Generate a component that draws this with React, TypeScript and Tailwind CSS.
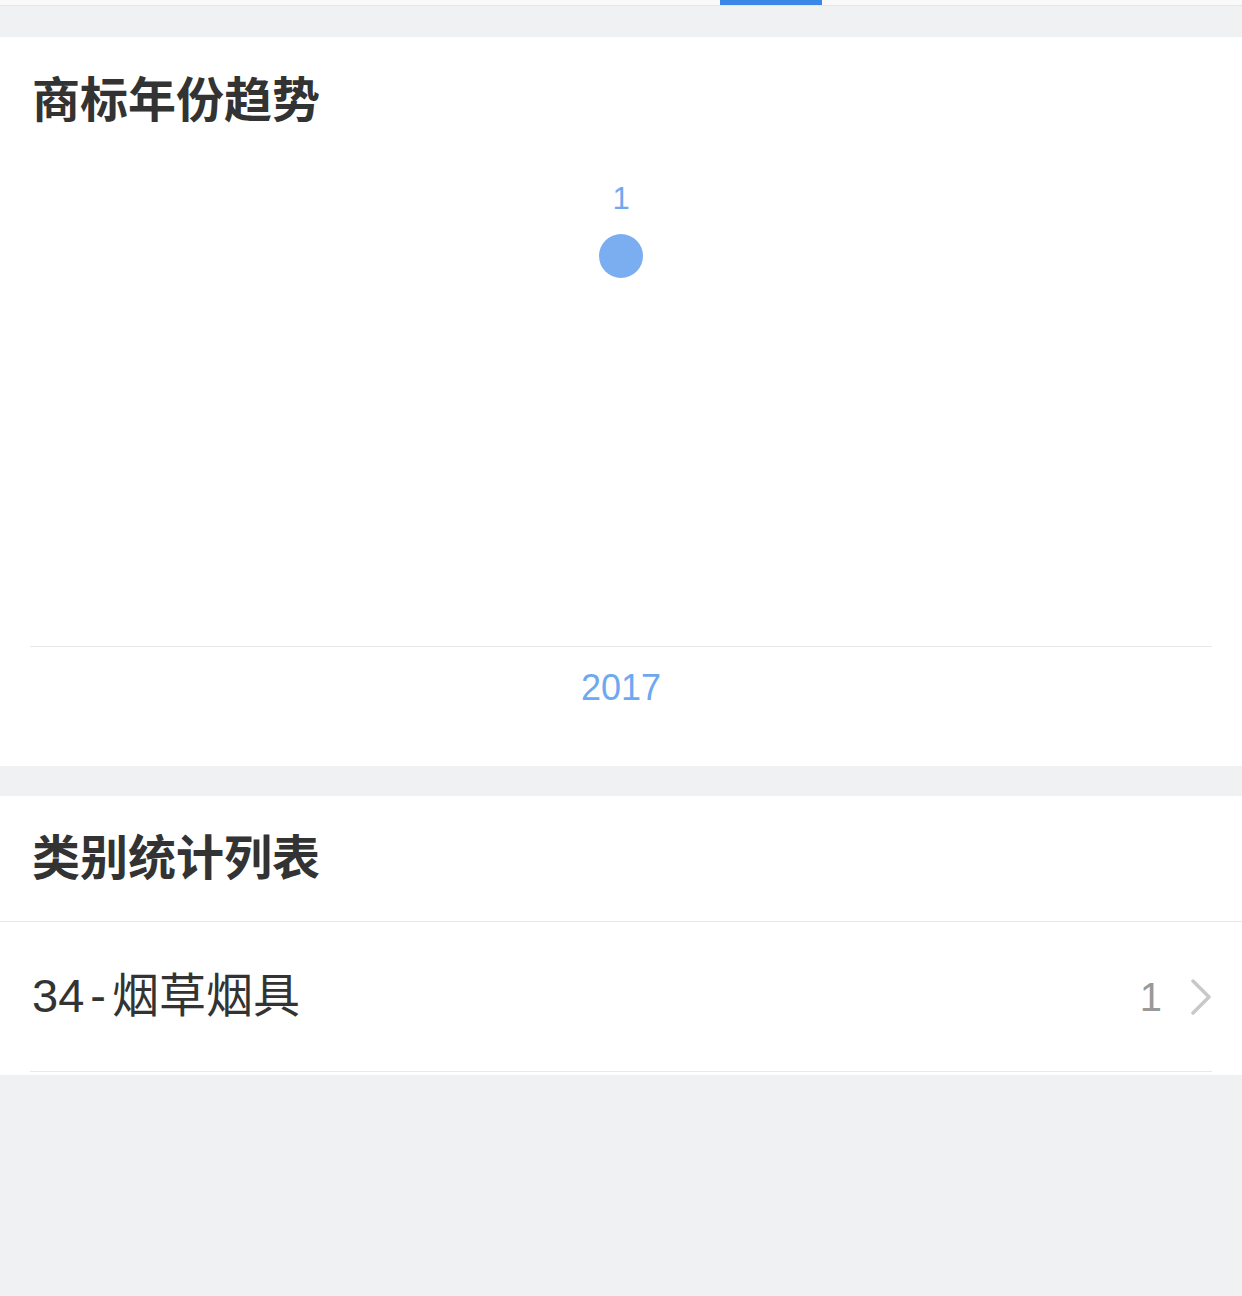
import React from 'react';

const font = { fontFamily: '"Liberation Sans", "Noto Sans CJK SC", sans-serif' };

type TrendPoint = { year: string; count: number };
type CategoryRow = { code: string; name: string; count: number };

const trend: TrendPoint[] = [{ year: '2017', count: 1 }];
const categories: CategoryRow[] = [{ code: '34', name: '烟草烟具', count: 1 }];

function ChevronRight() {
    return (
        <svg width="22" height="36" viewBox="0 0 22 36" fill="none">
            <path d="M3 2 L19 18 L3 34" stroke="#c8c8c8" strokeWidth="3.5" strokeLinecap="round" strokeLinejoin="round" />
        </svg>
    );
}

export default function App() {
    return (
        <div className="min-h-[1296px] bg-[#f0f1f3]" style={font}>
            {/* Tab strip (indicator only visible) */}
            <div className="relative h-[6px] bg-[#f9f9f9] border-b border-[#e6e6e6]">
                <div className="absolute left-[720px] top-0 h-[5px] w-[102px] bg-[#3b87e6]" />
            </div>

            {/* Year trend */}
            <section className="mt-[31px] bg-white h-[729px] flex flex-col">
                <h2 className="pt-[31px] px-[32px] text-[48px] leading-[66px] font-semibold text-[#333]">商标年份趋势</h2>
                <div className="mx-[30px] flex-1 flex flex-col">
                    <div className="relative h-[513px] border-b border-[#e8e8e8]">
                        {trend.map(p => (
                            <div key={p.year} className="absolute left-1/2 top-[45px] -translate-x-1/2 flex flex-col items-center">
                                <span className="text-[31px] leading-[40px] text-[#6ea8f0]">{p.count}</span>
                                <span className="mt-[15px] block h-[44px] w-[44px] rounded-full bg-[#7aaef0]" />
                            </div>
                        ))}
                    </div>
                    <div className="flex justify-center pt-[20px]">
                        {trend.map(p => (
                            <span key={p.year} className="text-[36px] leading-[42px] text-[#6ea8f0]">{p.year}</span>
                        ))}
                    </div>
                </div>
            </section>

            {/* Category list */}
            <section className="mt-[30px] bg-white pb-[3px]">
                <div className="h-[126px] flex items-center px-[32px] border-b border-[#e8e8e8]">
                    <h2 className="text-[48px] leading-[66px] font-semibold text-[#333]">类别统计列表</h2>
                </div>
                {categories.map(c => (
                    <div key={c.name} className="mx-[30px] h-[150px] flex items-center border-b border-[#e8e8e8]">
                        <span className="pl-[2px] text-[47px] text-[#333]">
                            {c.code}<span className="mx-[6px]">-</span>{c.name}
                        </span>
                        <span className="ml-auto text-[40px] text-[#999]">{c.count}</span>
                        <span className="ml-[28px] flex items-center">
                            <ChevronRight />
                        </span>
                    </div>
                ))}
            </section>
        </div>
    );
}
